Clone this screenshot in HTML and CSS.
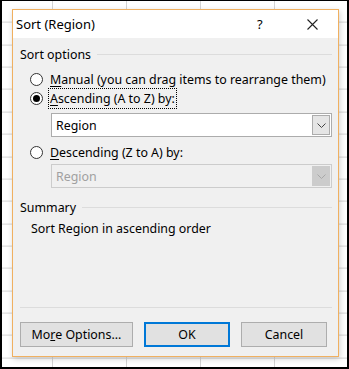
FILE: index.html
```html
<!DOCTYPE html>
<html lang="en">
<head>
  <meta charset="UTF-8">
  <link rel="stylesheet" href="styles.css">
  <title>Sort (Region)</title>
</head>
<body>
  <div class="dialog">
    <div class="title-bar">
      <span class="title">Sort (Region)</span>
      <span class="help">?</span>
      <span class="close">
        <svg width="11" height="11" viewBox="0 0 11 11"><path d="M0.5 0.5 L10.5 10.5 M10.5 0.5 L0.5 10.5" stroke="#222" stroke-width="1.1" fill="none"/></svg>
      </span>
    </div>

    <div class="dialog-body">
      <div class="group-head"><span>Sort options</span><div class="rule"></div></div>

      <div class="option">
        <span class="radio"></span>
        <span class="label"><u>M</u>anual (you can drag items to rearrange them)</span>
      </div>
      <div class="option">
        <span class="radio checked"></span>
        <span class="label focused"><u>A</u>scending (A to Z) by:</span>
      </div>
      <div class="combo combo-first">
        <span class="combo-text">Region</span>
        <span class="combo-button">
          <svg width="9" height="5" viewBox="0 0 9 5"><path d="M0.5 0.5 L4.5 4.5 L8.5 0.5" stroke="#444" stroke-width="1" fill="none"/></svg>
        </span>
      </div>
      <div class="option option-third">
        <span class="radio"></span>
        <span class="label"><u>D</u>escending (Z to A) by:</span>
      </div>
      <div class="combo combo-second disabled">
        <span class="combo-text">Region</span>
        <span class="combo-button">
          <svg width="9" height="5" viewBox="0 0 9 5"><path d="M0.5 0.5 L4.5 4.5 L8.5 0.5" stroke="#a8a8a8" stroke-width="1" fill="none"/></svg>
        </span>
      </div>

      <div class="group-head summary-head"><span>Summary</span><div class="rule"></div></div>
      <div class="summary-text">Sort Region in ascending order</div>
    </div>

    <div class="footer">
      <button class="btn btn-wide">Mo<u>r</u>e Options...</button>
      <button class="btn btn-default">OK</button>
      <button class="btn">Cancel</button>
    </div>
  </div>
</body>
</html>
```

FILE: styles.css
```css
html {
  margin: 0;
}
body {
  margin: 0;
  width: 349px;
  height: 369px;
  box-sizing: border-box;
  border: 2px solid #000;
  border-top-width: 1px;
  font-family: 'Noto Sans', 'Open Sans', Arial, sans-serif;
  font-size: 12.4px;
  color: #000;
  background-color: #fff;
  background-image:
    repeating-linear-gradient(to bottom, transparent 0, transparent 21.36px, #d4d4d4 21.36px, #d4d4d4 22.36px),
    repeating-linear-gradient(to right, transparent 0, transparent 73px, #d4d4d4 73px, #d4d4d4 74px);
  background-position: -2px 0.6px, -21px 0;
  overflow: hidden;
}

.dialog {
  margin: 8px 0 0 10px;
  width: 327px;
  height: 348px;
  box-sizing: border-box;
  border: 1px solid #f0b060;
  background-color: #f0f0f0;
  box-shadow: 1px 2px 6px rgba(0, 0, 0, 0.18);
  display: flex;
  flex-direction: column;
}

.title-bar {
  height: 28px;
  background-color: #fff;
  display: flex;
  align-items: center;
  padding-left: 3px;
}
.title {
  font-size: 13px;
  flex: 1;
}
.help {
  font-size: 13px;
  width: 50px;
}
.close {
  width: 31px;
  display: flex;
  align-items: center;
}

.dialog-body {
  flex: 1;
  padding: 8px 6px 0 7px;
}

.group-head {
  height: 16px;
  display: flex;
  align-items: center;
  gap: 6px;
}
.group-head .rule {
  flex: 1;
  height: 1px;
  background-color: #dcdcdc;
}

.option {
  height: 19px;
  display: flex;
  align-items: center;
  gap: 7px;
  padding-left: 10px;
  margin-top: 8px;
}
.option + .option {
  margin-top: 0;
}
.option-third {
  margin-top: 6px;
}
.radio {
  width: 13px;
  height: 13px;
  box-sizing: border-box;
  border: 1px solid #333;
  border-radius: 50%;
  background-color: #fff;
  display: flex;
  align-items: center;
  justify-content: center;
}
.radio.checked::after {
  content: '';
  width: 7px;
  height: 7px;
  border-radius: 50%;
  background-color: #000;
}
.label u {
  text-underline-offset: 2px;
}
.label.focused {
  outline: 1px dotted #000;
  outline-offset: 1px;
}

.combo {
  margin-left: 31px;
  height: 24px;
  box-sizing: border-box;
  border: 1px solid #acacac;
  background-color: #fff;
  display: flex;
  align-items: stretch;
}
.combo-first {
  margin-top: 5px;
}
.combo-second {
  margin-top: 2px;
}
.combo-text {
  flex: 1;
  display: flex;
  align-items: center;
  padding-left: 4px;
}
.combo-button {
  width: 18px;
  margin: 1px;
  box-sizing: border-box;
  border: 1px solid #acacac;
  background-color: #e5e5e5;
  display: flex;
  align-items: center;
  justify-content: center;
}
.combo.disabled {
  background-color: #f0f0f0;
  border-color: #cccccc;
  color: #a0a0a0;
}
.combo.disabled .combo-button {
  background-color: #cccccc;
  border-color: #cccccc;
}

.summary-head {
  margin-top: 11px;
}
.summary-text {
  margin-top: 6px;
  height: 16px;
  line-height: 16px;
  padding-left: 11px;
}

.footer {
  margin: 0 6px 0 7px;
  border-top: 1px solid #dcdcdc;
  padding: 14px 0 9px;
  display: flex;
  gap: 11px;
}
.btn {
  width: 86px;
  height: 25px;
  box-sizing: border-box;
  border: 1px solid #adadad;
  background-color: #e1e1e1;
  font-family: 'Noto Sans', 'Open Sans', Arial, sans-serif;
  font-size: 12.4px;
  color: #000;
  padding: 0;
}
.btn-wide {
  width: 113px;
}
.btn-default {
  border: 2px solid #0078d7;
}
```
